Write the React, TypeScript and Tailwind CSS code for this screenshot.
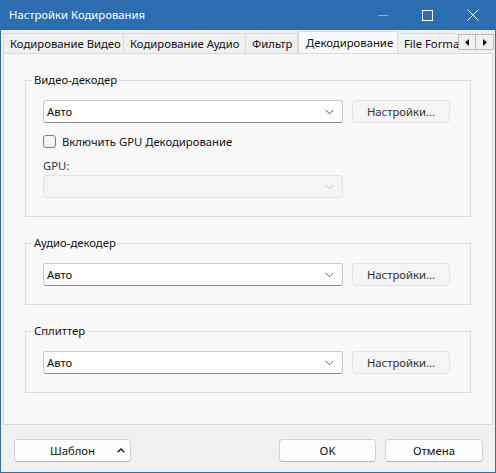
import React from "react";

function ChevronDown({ color = "#5a5a5a" }: { color?: string }) {
  return (
    <svg width="9" height="6" viewBox="0 0 9 6" className="shrink-0">
      <path d="M0.5 0.8 L4.5 4.8 L8.5 0.8" fill="none" stroke={color} strokeWidth="1" />
    </svg>
  );
}

function Combo({ value, disabled }: { value?: string; disabled?: boolean }) {
  return (
    <div
      className={
        disabled
          ? "w-[300px] h-[23px] bg-[#f5f5f5] border border-[#e3e3e3] rounded-[3px] flex items-center justify-end pr-[8px]"
          : "w-[300px] h-[23px] bg-white border border-[#c8c8c8] border-b-[#8c8c8c] rounded-[3px] flex items-center justify-between pl-[3px] pr-[8px]"
      }
    >
      {value && <span className="text-[#111]">{value}</span>}
      <ChevronDown color={disabled ? "#c2c2c2" : "#5a5a5a"} />
    </div>
  );
}

function SettingsBtn() {
  return (
    <div className="w-[98px] h-[23px] bg-[#f5f5f5] border border-[#e3e3e3] rounded-[4px] flex items-center justify-center text-[#333]">
      Настройки...
    </div>
  );
}

function Group({ title, children }: { title: string; children: React.ReactNode }) {
  return (
    <fieldset className="border border-[#dcdcdc] p-0 m-0">
      <legend className="ml-[6px] px-[2px] h-[16px] leading-[16px] text-[#111]">{title}</legend>
      <div className="px-[17px] pb-[18px]">{children}</div>
    </fieldset>
  );
}

function Tab({ label, w, selected }: { label: string; w: number; selected?: boolean }) {
  return (
    <div
      className={
        selected
          ? "shrink-0 h-[23px] -mb-[1px] z-10 bg-[#f9f9f9] border border-b-0 border-[#d9d9d9] flex items-center pl-[7px] pb-[1px] text-[#111] whitespace-nowrap"
          : "shrink-0 h-[20px] bg-[#f0f0f0] border border-b-0 border-l-0 border-[#d9d9d9] flex items-center pl-[6px] text-[#111] whitespace-nowrap first:border-l"
      }
      style={{ width: w }}
    >
      {label}
    </div>
  );
}

function FooterBtn({ children, w }: { children: React.ReactNode; w: number }) {
  return (
    <div
      className="relative h-[23px] bg-[#fdfdfd] border border-[#d0d0d0] border-b-[#b5b5b5] rounded-[4px] flex items-center justify-center text-[#111]"
      style={{ width: w }}
    >
      {children}
    </div>
  );
}

export default function App() {
  return (
    <div className="w-[496px] h-[473px] bg-[#2c6db0] flex flex-col px-[1px] pb-[1px] font-['Noto_Sans',sans-serif] text-[11.3px] leading-[16px] overflow-hidden">
      {/* Title bar */}
      <div className="h-[30px] shrink-0 flex items-center">
        <div className="flex-1 pl-[8px] text-white">Настройки Кодирования</div>
        <div className="w-[45px] h-[30px] flex items-center justify-center">
          <div className="w-[10px] h-[1px] bg-[#8fb2d8]" />
        </div>
        <div className="w-[45px] h-[30px] flex items-center justify-center">
          <div className="w-[11px] h-[11px] border border-white" />
        </div>
        <div className="w-[45px] h-[30px] flex items-center justify-center">
          <svg width="12" height="12" viewBox="0 0 12 12">
            <path d="M0.5 0.5 L11.5 11.5 M11.5 0.5 L0.5 11.5" stroke="white" strokeWidth="1" />
          </svg>
        </div>
      </div>

      {/* Body */}
      <div className="flex-1 bg-[#f0f0f0] flex flex-col">
        {/* Tab strip */}
        <div className="h-[23px] shrink-0 flex items-end pl-[2px] relative">
          <div className="w-[455px] flex items-end overflow-hidden h-[23px] relative z-10">
            <Tab label="Кодирование Видео" w={121} />
            <Tab label="Кодирование Аудио" w={122} />
            <Tab label="Фильтр" w={52} />
            <Tab label="Декодирование" w={100} selected />
            <Tab label="File Format" w={80} />
          </div>
          <div className="self-start mt-[4px] flex h-[16px] border border-[#b9b9b9] bg-[#f0f0f0] z-10">
            <div className="w-[17px] h-full flex items-center justify-center border-r border-[#b9b9b9]">
              <svg width="4" height="7" viewBox="0 0 4 7"><path d="M4 0 L0 3.5 L4 7 Z" fill="#111" /></svg>
            </div>
            <div className="w-[17px] h-full flex items-center justify-center">
              <svg width="4" height="7" viewBox="0 0 4 7"><path d="M0 0 L4 3.5 L0 7 Z" fill="#111" /></svg>
            </div>
          </div>
        </div>

        {/* Panel */}
        <div className="mx-[2px] h-[372px] shrink-0 bg-[#f9f9f9] border border-[#d9d9d9] pt-[18px] pl-[21px] pr-[21px] flex flex-col gap-[18px]">
          <Group title="Видео-декодер">
            <div className="mt-[12px] flex items-center gap-[9px]">
              <Combo value="Авто" />
              <SettingsBtn />
            </div>
            <div className="mt-[12px] flex items-center h-[13px]">
              <div className="w-[13px] h-[13px] border border-[#7e7e7e] rounded-[3px] bg-[#f5f5f5]" />
              <span className="ml-[6px] text-[#111]">Включить GPU Декодирование</span>
            </div>
            <div className="mt-[11px] text-[#333] leading-[14px]">GPU:</div>
            <div className="mt-[2px]">
              <Combo disabled />
            </div>
          </Group>

          <Group title="Аудио-декодер">
            <div className="mt-[12px] flex items-center gap-[9px]">
              <Combo value="Авто" />
              <SettingsBtn />
            </div>
          </Group>

          <Group title="Сплиттер">
            <div className="mt-[12px] flex items-center gap-[9px]">
              <Combo value="Авто" />
              <SettingsBtn />
            </div>
          </Group>
        </div>

        {/* Footer */}
        <div className="flex-1 flex items-start pt-[14px] pl-[13px] pr-[12px]">
          <FooterBtn w={117}>
            Шаблон
            <svg width="8" height="5" viewBox="0 0 8 5" className="absolute right-[5px] top-[8px]">
              <path d="M0.7 4.3 L4 1 L7.3 4.3" fill="none" stroke="#111" strokeWidth="1.3" />
            </svg>
          </FooterBtn>
          <div className="flex-1" />
          <FooterBtn w={97}>OK</FooterBtn>
          <div className="w-[9px]" />
          <FooterBtn w={98}>Отмена</FooterBtn>
        </div>
      </div>
    </div>
  );
}
